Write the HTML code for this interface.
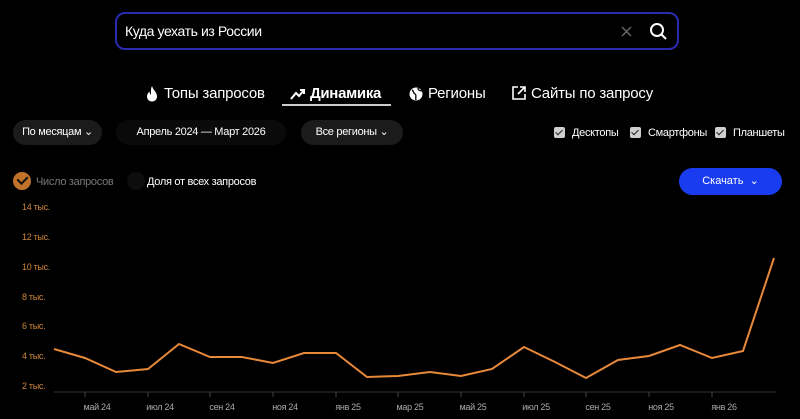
<!DOCTYPE html><html><head><meta charset="utf-8"><style>
body{margin:0;width:800px;height:419px;background:#000;overflow:hidden;font-family:"Liberation Sans","DejaVu Sans",sans-serif;color:#fff;position:relative}
.a{position:absolute;white-space:nowrap}
.search{left:115px;top:12px;width:564px;height:38px;border:2px solid #2a2cb0;border-radius:10px;box-sizing:border-box}
.pill{background:#1b1b1b;border-radius:16px;height:25px;line-height:25px;font-size:11px;text-align:center;letter-spacing:-.3px}
.cb{width:11px;height:11px;background:#cfcfcf;border-radius:2px;display:inline-block;vertical-align:-2px;margin-right:7px;position:relative}
.cb:after{content:"";position:absolute;left:3px;top:1px;width:3px;height:6px;border:solid #222;border-width:0 1.5px 1.5px 0;transform:rotate(45deg)}
.yl{font-size:9px;color:#d0873a;left:22px;letter-spacing:-.3px}
.xl{font-size:9px;color:#aaa;top:402px;letter-spacing:-.3px;transform:translateX(-50%)}
</style></head><body>
<div class="a search"></div>
<div class="a" style="left:125px;top:23px;font-size:14px;letter-spacing:-.4px">Куда уехать из России</div>
<svg class="a" style="left:621px;top:26px" width="11" height="11"><path d="M1 1L10 10M10 1L1 10" stroke="#666" stroke-width="1.5"/></svg>
<svg class="a" style="left:649px;top:22px" width="20" height="20"><circle cx="8" cy="8" r="6" stroke="#fff" stroke-width="2" fill="none"/><line x1="12.5" y1="12.5" x2="17" y2="17" stroke="#fff" stroke-width="2"/></svg>
<svg class="a" style="left:146px;top:86px" width="12" height="16"><path d="M6 0C7 4 11 6 11 10.5C11 13.5 8.8 15.5 6 15.5C3.2 15.5 1 13.5 1 10.5C1 8 2.5 6.5 3.5 5.5C3.5 7.5 4.5 8.5 5 8.5C5 6 4.5 3 6 0Z" fill="#fff"/></svg>
<div class="a" style="left:164px;top:85px;font-size:15px;letter-spacing:-.2px">Топы запросов</div>
<svg class="a" style="left:290px;top:88px" width="16" height="12"><path d="M1 11L6 5L9 8L14 2M10 2H14V6" stroke="#fff" stroke-width="2" fill="none"/></svg>
<div class="a" style="left:310px;top:85px;font-size:15px;font-weight:bold;letter-spacing:-.3px">Динамика</div>
<div class="a" style="left:282px;top:104px;width:109px;height:2px;background:#ccc"></div>
<svg class="a" style="left:409px;top:87px" width="14" height="14"><circle cx="7" cy="7" r="6.5" fill="#fff"/><path d="M3 3C5 4 4 6 6 7C8 8 6 11 7 13M9 1C9 3 11 4 13 4" stroke="#000" stroke-width="1.3" fill="none"/></svg>
<div class="a" style="left:428px;top:85px;font-size:15px;letter-spacing:-.2px">Регионы</div>
<svg class="a" style="left:512px;top:86px" width="14" height="14"><path d="M6 1H1V13H13V8M8 1H13V6M13 1L6 8" stroke="#fff" stroke-width="1.6" fill="none"/></svg>
<div class="a" style="left:531px;top:85px;font-size:15px;letter-spacing:-.2px">Сайты по запросу</div>
<div class="a pill" style="left:13px;top:120px;width:89px">По месяцам ⌄</div>
<div class="a pill" style="left:116px;top:120px;width:170px;background:#0a0a0a">Апрель 2024 — Март 2026</div>
<div class="a pill" style="left:301px;top:120px;width:102px">Все регионы ⌄</div>
<div class="a" style="left:554px;top:127px;font-size:11px;letter-spacing:-.3px"><span class="cb"></span>Десктопы</div>
<div class="a" style="left:630px;top:127px;font-size:11px;letter-spacing:-.3px"><span class="cb"></span>Смартфоны</div>
<div class="a" style="left:715px;top:127px;font-size:11px;letter-spacing:-.3px"><span class="cb"></span>Планшеты</div>
<div class="a" style="left:13px;top:172px;width:18px;height:18px;border-radius:9px;background:#c0722a"></div>
<div class="a" style="left:16px;top:175px;width:5px;height:8px;border:solid #111;border-width:0 2px 2px 0;transform:translate(3px,-1px) rotate(45deg)"></div>
<div class="a" style="left:36px;top:176px;font-size:11px;color:#777;letter-spacing:-.3px">Число запросов</div>
<div class="a" style="left:127px;top:172px;width:18px;height:18px;border-radius:9px;background:#0d0d0d"></div>
<div class="a" style="left:147px;top:176px;font-size:11px;letter-spacing:-.3px">Доля от всех запросов</div>
<div class="a" style="left:679px;top:168px;width:103px;height:27px;border-radius:14px;background:#1a3cf0;font-size:11px;line-height:27px;text-align:center">Скачать &nbsp;⌄</div>
<div class="a yl" style="top:202px">14 тыс.</div><div class="a yl" style="top:232px">12 тыс.</div><div class="a yl" style="top:262px">10 тыс.</div><div class="a yl" style="top:292px">8 тыс.</div><div class="a yl" style="top:321px">6 тыс.</div><div class="a yl" style="top:351px">4 тыс.</div><div class="a yl" style="top:381px">2 тыс.</div>
<svg class="a" style="left:0;top:0" width="800" height="419">
<line x1="54" y1="392" x2="776" y2="392" stroke="#333"/>
<g stroke="#444"><line x1="85" y1="392" x2="85" y2="397"/><line x1="148" y1="392" x2="148" y2="397"/><line x1="210" y1="392" x2="210" y2="397"/><line x1="273" y1="392" x2="273" y2="397"/><line x1="336" y1="392" x2="336" y2="397"/><line x1="398" y1="392" x2="398" y2="397"/><line x1="461" y1="392" x2="461" y2="397"/><line x1="524" y1="392" x2="524" y2="397"/><line x1="586" y1="392" x2="586" y2="397"/><line x1="649" y1="392" x2="649" y2="397"/><line x1="712" y1="392" x2="712" y2="397"/></g>
<polyline fill="none" stroke="#e8893a" stroke-width="2" points="54,349 85,358 116,372 148,369 179,344 210,357 242,357 273,363 304,353 336,353 367,377 398,376 430,372 461,376 492,369 524,347 555,362 586,378 618,360 649,356 680,345 712,358 743,351 774,258"/>
</svg>
<div class="a xl" style="left:97px">май 24</div><div class="a xl" style="left:160px">июл 24</div><div class="a xl" style="left:222px">сен 24</div><div class="a xl" style="left:285px">ноя 24</div><div class="a xl" style="left:348px">янв 25</div><div class="a xl" style="left:410px">мар 25</div><div class="a xl" style="left:473px">май 25</div><div class="a xl" style="left:536px">июл 25</div><div class="a xl" style="left:598px">сен 25</div><div class="a xl" style="left:661px">ноя 25</div><div class="a xl" style="left:724px">янв 26</div>
</body></html>
